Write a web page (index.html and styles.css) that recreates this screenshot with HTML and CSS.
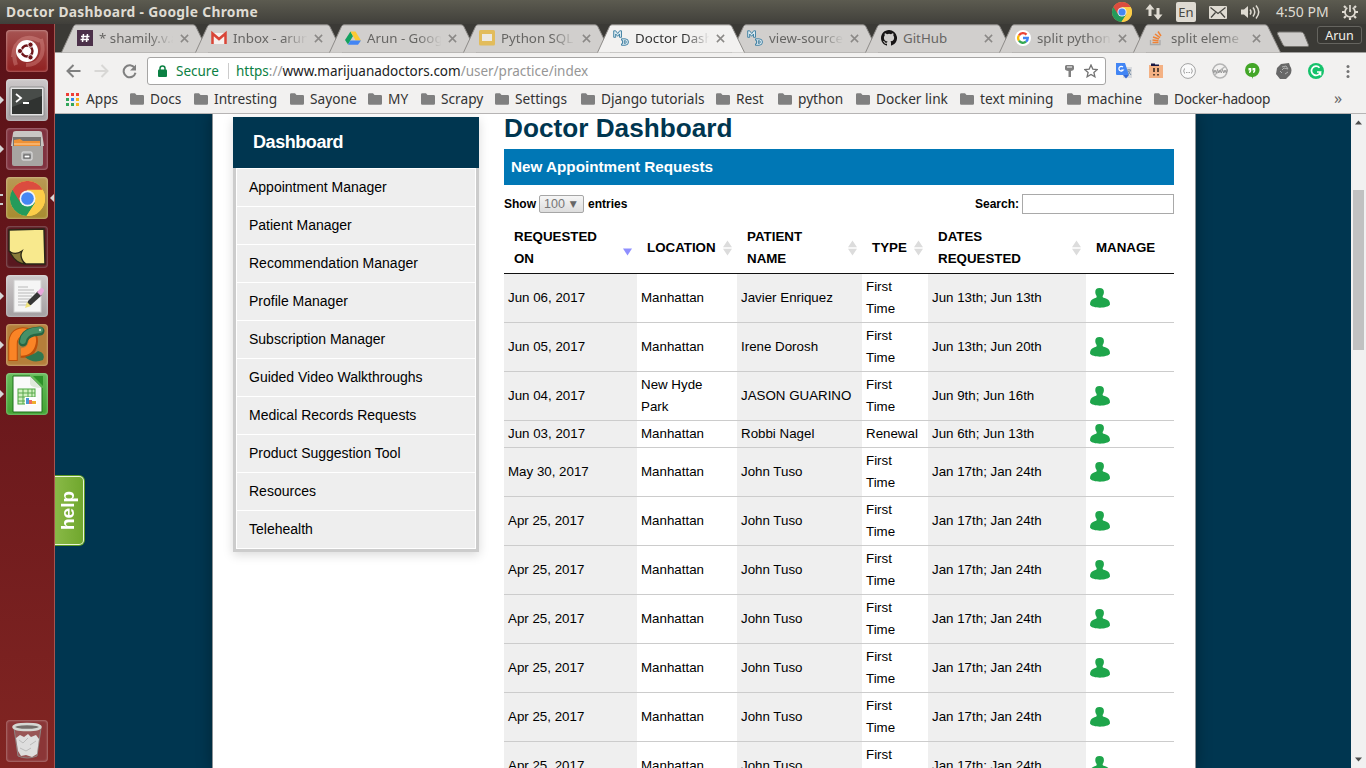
FILE: index.html
```html
<!DOCTYPE html>
<html lang="en">
<head>
<meta charset="utf-8">
<title>Doctor Dashboard</title>
<link rel="stylesheet" href="styles.css">
</head>
<body>
<svg class="defs" width="0" height="0">
  <defs>
    <symbol id="folder" viewBox="0 0 14 12"><path d="M0 1.500Q0 .300 1.200.300H5L6.500 2H12.800Q14 2 14 3.200V10.500Q14 11.700 12.800 11.700H1.200Q0 11.700 0 10.500Z" fill="#808080"/></symbol>
    <symbol id="tabshape" viewBox="0 0 148 29"><path d="M.5 28.500L12.500 2.500Q13.300.800 15 .800H132Q134 .800 134.800 2.500L147.500 28.500" stroke="#8d8b88"/></symbol>
    <symbol id="close" viewBox="0 0 10 10"><path d="M1 1L9 9M9 1L1 9" stroke="#8b8987" stroke-width="1.700"/></symbol>
    <symbol id="md" viewBox="0 0 16 16"><g fill="#d9e8ef" stroke="#387c9f" stroke-width=".9"><path d="M.700 7.300V.800H2.700L4.700 3.500 6.700.800H8.500V7.300H6.500V4L4.700 6.300 2.700 4V7.300Z"/><path fill-rule="evenodd" d="M8.500 8.800H12Q15.500 8.800 15.500 12T12 15.300H8.500V13.800H9.500V10.300H8.500ZM11.300 10.700V13.400H12Q13.300 13.200 13.300 12T12 10.700Z"/></g></symbol>
    <symbol id="google" viewBox="0 0 16 16"><circle cx="8" cy="8" r="8" fill="#fff"/><g fill="none" stroke-width="2.300"><path d="M4 5.300A4.800 4.800 0 0 1 11.500 4.600" stroke="#ea4335"/><path d="M4 5.300A4.800 4.800 0 0 0 4 10.700" stroke="#fbbc05"/><path d="M4 10.700A4.800 4.800 0 0 0 11 11.700" stroke="#34a853"/><path d="M8 8H12.800Q12.800 10.200 11 11.700" stroke="#4285f4"/></g></symbol>
    <symbol id="chrome" viewBox="0 0 36 36"><circle cx="18" cy="18" r="18" fill="#fccd48"/><path d="M18 18L2.400 9A18 18 0 0 0 17 36L26 22Z" fill="#249b5b"/><path d="M18 9H33.600A18 18 0 0 1 17 36L25.800 22.500Z" fill="#fccd48"/><path d="M2.400 9A18 18 0 0 1 33.600 9H18L10 21Z" fill="#db4c3f"/><circle cx="18" cy="18" r="8.200" fill="#f4f4f4"/><circle cx="18" cy="18" r="6.500" fill="#4587f2"/></symbol>
    <symbol id="user" viewBox="0 0 20 20"><path d="M9.500 0C12.700 0 14.100 1.500 13.900 4.500C13.800 6.700 12.600 7.500 12.600 8.500C12.600 9.700 14 9.700 16 10.500C19 11.800 20 13.500 20 16.500C17.500 20.700 2.500 20.700 0 16.500C0 13.500 1 11.800 4 10.500C6 9.700 6.700 9.700 6.700 8.500C6.700 7.500 5.400 6.700 5.300 4.500C5.100 1.500 6.300 0 9.500 0Z" fill="#1ea54b"/></symbol>
    <symbol id="sort" viewBox="0 0 9 16"><path d="M4.500.500L9 7.200H0ZM0 8.800H9L4.500 15.500Z" fill="#dcdcdc"/></symbol>
  </defs>
</svg>

<header class="panel">
  <span class="panel-title">Doctor Dashboard - Google Chrome</span>
  <div class="indicators">
    <svg width="20" height="20"><use href="#chrome"/></svg>
    <svg width="18" height="18" viewBox="0 0 18 18" fill="#dfdbd2"><path d="M5 1L9.500 6.500H6.500V13H3.500V6.500H.500ZM13 17L17.500 11.500H14.500V5H11.500V11.500H8.500Z"/></svg>
    <span class="lang">En</span>
    <svg width="18" height="13" viewBox="0 0 18 13"><rect width="18" height="13" rx="1" fill="#dfdbd2"/><path d="M1.500 1.500L9 7.500 16.500 1.500M2 11.500L6.500 6.500M16 11.500L11.500 6.500" fill="none" stroke="#45443f" stroke-width="1.200"/></svg>
    <svg width="20" height="16" viewBox="0 0 20 16"><path d="M0 5.500H3L7 2V14L3 10.500H0Z" fill="#dfdbd2"/><path d="M9 5.500Q11 8 9 10.500M12 3.500Q15.500 8 12 12.500M15 1.500Q20.500 8 15 14.500" fill="none" stroke="#dfdbd2" stroke-width="1.500"/></svg>
    <span class="clock">4:50 PM</span>
    <svg width="16" height="16" viewBox="0 0 16 16" fill="none" stroke="#dfdbd2"><path d="M5.300 3.800A5 5 0 1 0 10.700 3.800M8 1V8" stroke-width="1.700"/><path d="M3.800 3.800L2 2M12.200 3.800L14 2M3 8H0M13 8H16M4 12L2 14M12 12L14 14M8 13.500V16" stroke-width="2.200"/></svg>
  </div>
</header>

<div class="desktop">
  <nav class="launcher">
    <div class="tile ubuntu"><svg viewBox="0 0 42 42"><g fill="none" stroke="#f2b0aa" stroke-opacity=".3" stroke-width="4"><path d="M7 27C8 8 22 4 34 11M35 9C40 25 33 35 20 35M10 35Q5 21 15 12"/></g><circle cx="21" cy="21" r="11" fill="#fff"/><circle cx="21" cy="21" r="5.500" fill="none" stroke="#6e151a" stroke-width="2.400"/><g fill="#6e151a" stroke="#fff" stroke-width=".9"><circle cx="14" cy="21" r="2.600"/><circle cx="24.500" cy="14.700" r="2.600"/><circle cx="24.500" cy="27.300" r="2.600"/></g></svg></div>
    <div class="tile terminal run"><svg viewBox="0 0 42 42"><rect x="4" y="8" width="34" height="29" rx="1" fill="#e3e3e3" stroke="#8f8f8f"/><rect x="6" y="10" width="30" height="25" fill="#303331"/><path d="M6 10H36V17L6 28Z" fill="#484c49"/><path d="M10 15L15 19 10 23M17 24H23" fill="none" stroke="#fff" stroke-width="1.800"/></svg></div>
    <div class="tile files run"><svg viewBox="0 0 42 42"><path d="M7 5Q7 3 10 3H33Q36 3 36 5L38 18H5Z" fill="#c9c7c4"/><rect x="7" y="9" width="28" height="10" fill="#777370"/><path d="M8 12L14 11 17 13H34V18H8Z" fill="#ee9136"/><path d="M8 16H34" stroke="#ffd29e"/><path d="M6 18H37V36Q37 38 35 38H8Q6 38 6 36Z" fill="#a7a5a2"/><rect x="16" y="24" width="10" height="8" rx="1" fill="#aaa" stroke="#e5e5e5"/><rect x="18" y="27" width="6" height="3" fill="#fff" stroke="#555"/></svg></div>
    <div class="tile chrome focus"><svg viewBox="0 0 42 42"><use href="#chrome" x="4" y="4" width="35" height="35"/></svg></div>
    <div class="tile notes"><svg viewBox="0 0 42 42"><path d="M3 4L38 3 39 38H20L3 25Z" fill="#f8e98d" stroke="#292619" stroke-width="1.500"/><path d="M4 26Q10 29 16 25Q13 31 19 38Q9 37 4 26Z" fill="#897b3a" stroke="#2b2715" stroke-width="1.300"/></svg></div>
    <div class="tile editor run"><svg viewBox="0 0 42 42"><rect x="8" y="5" width="27" height="32" fill="#f5f5f5" stroke="#d0d0d0"/><path d="M12 12H22M12 15H28M12 18H29M12 21H26M12 24H24M12 27H21M12 30H20" stroke="#b9b9b9"/><path d="M20 31L22 26 32 16 36 20 25 30Z" fill="#363636"/><path d="M19 33L21 27 25 31Z" fill="#efe27c"/><path d="M31 17L35 13Q38 13 38 16L35 21Z" fill="#e8a8dc"/></svg></div>
    <div class="tile pycharm run"><svg viewBox="0 0 42 42"><path d="M7 37V20Q7 9 17 8Q29 9 27 20Q25 30 15 29" fill="none" stroke="#bd4f0a" stroke-width="9.500"/><path d="M7 36V20Q7 9 17 8Q28 9 26 19Q24 28 15 28" fill="none" stroke="#fa8426" stroke-width="7.500"/><path d="M17 18Q18 10 27 8L34 7" fill="none" stroke="#276644" stroke-width="9" stroke-linecap="round"/><path d="M17 17Q18 9 27 7L34 6" fill="none" stroke="#469067" stroke-width="6" stroke-linecap="round"/><path d="M19 33Q27 31 32 27Q40 29 37 36Q27 40 19 33Z" fill="#2f774f"/><circle cx="34" cy="6" r="1.200" fill="#c3d9c5"/></svg></div>
    <div class="tile calc run"><svg viewBox="0 0 42 42"><path d="M7 3H24L36 15V39H7Z" fill="#fafafa" stroke="#1e711c"/><path d="M24 3V11Q25 15 36 15Z" fill="#dfe9db"/><path d="M27 3H37V13Z" fill="#2e932a"/><rect x="12" y="16" width="17" height="15" fill="#d0f0be" stroke="#48a83d"/><path d="M12 20H29M12 24H29M12 28H29M17 16V31M22 16V31M26 16V31" stroke="#58a74d"/><rect x="19" y="24" width="12" height="8" fill="#fff"/><path d="M20 31V25H23V31Z" fill="#4a95d5"/><path d="M23 31V27H26V31Z" fill="#ef6c5e"/><path d="M26 31V28H30V31Z" fill="#edae2d"/></svg></div>
    <div class="tile trash"><svg viewBox="0 0 42 42"><path d="M8 8L12 36Q21 40 31 36L35 8" fill="#b7a2a0" fill-opacity=".3" stroke="#8d8482"/><path d="M10 18L14 15 18 17 22 14 25 17 30 15 33 19 31 34 26 37 20 35 15 36 12 31Z" fill="#dedede"/><path d="M13 20L17 23 22 18M24 25L30 21M14 28L20 31 25 28" stroke="#bbb" fill="none"/><ellipse cx="21" cy="7" rx="13.500" ry="3" fill="#746e6a" stroke="#d5d8d3" stroke-width="2.500"/></svg></div>
  </nav>

  <div class="browser">
    <div class="tabs">
      <div class="tab"><svg class="shape"><use href="#tabshape"/></svg><svg class="fav" viewBox="0 0 16 16"><rect width="16" height="16" fill="#4b3049"/><path d="M6.500 4L5.500 12M10.500 4L9.500 12M4 6.500H12.500M3.500 9.500H12" stroke="#fff" stroke-width="1.500"/></svg><span class="label">* shamily.v.a</span><svg class="x"><use href="#close"/></svg></div>
      <div class="tab"><svg class="shape"><use href="#tabshape"/></svg><svg class="fav" viewBox="0 0 16 16"><path d="M1 3H15V14H1Z" fill="#f5f0ee"/><path d="M1.500 14V3.500L8 9 14.500 3.500V14" fill="none" stroke="#d94537" stroke-width="2.500"/></svg><span class="label">Inbox - arun</span><svg class="x"><use href="#close"/></svg></div>
      <div class="tab"><svg class="shape"><use href="#tabshape"/></svg><svg class="fav" viewBox="0 0 16 16"><path d="M5.500 1.500L8 6 3 14.500 0 10Z" fill="#13a160"/><path d="M5.500 1.500H10.500L16 10.500H10.500Z" fill="#fcc934"/><path d="M5.500 10.500H16L13 14.800H3Z" fill="#4285f4"/></svg><span class="label">Arun - Goog</span><svg class="x"><use href="#close"/></svg></div>
      <div class="tab"><svg class="shape"><use href="#tabshape"/></svg><svg class="fav" viewBox="0 0 16 16"><rect width="16" height="15.500" rx="1.500" fill="#e2bc5b"/><rect x="3" y="4" width="10" height="7" fill="#ece9e3"/></svg><span class="label">Python SQL</span><svg class="x"><use href="#close"/></svg></div>
      <div class="tab active"><svg class="shape"><use href="#tabshape"/></svg><svg class="fav"><use href="#md"/></svg><span class="label">Doctor Dash</span><svg class="x"><use href="#close"/></svg></div>
      <div class="tab"><svg class="shape"><use href="#tabshape"/></svg><svg class="fav"><use href="#md"/></svg><span class="label">view-source</span><svg class="x"><use href="#close"/></svg></div>
      <div class="tab"><svg class="shape"><use href="#tabshape"/></svg><svg class="fav" viewBox="0 0 16 16"><path fill="#171515" d="M8 0C3.580 0 0 3.580 0 8c0 3.540 2.290 6.530 5.470 7.590.4.070.55-.17.55-.38 0-.19-.01-.82-.01-1.490-2.010.37-2.530-.49-2.690-.94-.09-.23-.48-.94-.82-1.130-.28-.15-.68-.52-.01-.53.63-.01 1.080.58 1.230.82.72 1.210 1.870.87 2.330.66.07-.52.28-.87.51-1.070-1.780-.2-3.640-.89-3.640-3.950 0-.87.31-1.590.82-2.150-.08-.2-.36-1.020.08-2.120 0 0 .67-.21 2.200.82a7.700 7.700 0 0 1 4 0c1.530-1.040 2.200-.82 2.200-.82.44 1.100.16 1.920.08 2.120.51.56.82 1.270.82 2.150 0 3.070-1.870 3.750-3.650 3.950.29.25.54.73.54 1.480 0 1.070-.01 1.930-.01 2.200 0 .21.15.46.55.38A8 8 0 0 0 8 0"/></svg><span class="label plain">GitHub</span><svg class="x"><use href="#close"/></svg></div>
      <div class="tab"><svg class="shape"><use href="#tabshape"/></svg><svg class="fav"><use href="#google"/></svg><span class="label">split python</span><svg class="x"><use href="#close"/></svg></div>
      <div class="tab"><svg class="shape"><use href="#tabshape"/></svg><svg class="fav" viewBox="0 0 16 16" fill="none"><path d="M1.500 10V14.500H11V10" stroke="#a9aaab" stroke-width="1.300"/><path d="M3.500 12.500H9.500M3.500 10L9.500 10.700M4 7L10 9M6 4L11 7.700M9 1.500L12 6" stroke="#ef8236" stroke-width="1.500"/></svg><span class="label">split eleme</span><svg class="x"><use href="#close"/></svg></div>
      <svg class="newtab" width="34" height="17" viewBox="0 0 34 17"><path d="M3 1H25Q27 1 28 3L32.500 14Q33 15.500 31 15.500H10Q8 15.500 7 14L1.500 3Q1 1 3 1Z" fill="#d0cecc" stroke="#777570"/></svg>
      <span class="profile">Arun</span>
    </div>

    <div class="toolbar">
      <div class="navs">
        <svg width="15" height="14" viewBox="0 0 15 14"><path d="M14.500 7H2M7.500 1L1.500 7 7.500 13" stroke="#808080"/></svg>
        <svg width="15" height="14" viewBox="0 0 15 14"><path d="M.500 7H13M7.500 1L13.500 7 7.500 13" stroke="#d8d7d5"/></svg>
        <svg width="15" height="15" viewBox="0 0 15 15"><path d="M12.700 4A6 6 0 1 0 13.500 8.700" stroke="#808080"/><path d="M14 .500V6.500H8Z" fill="#808080"/></svg>
      </div>
      <div class="omnibox">
        <svg width="9" height="12" viewBox="0 0 9 12"><rect y="4.500" width="9" height="7.500" rx="1" fill="#0b8043"/><path d="M2 5V3.300Q2 1 4.500 1T7 3.300V5" fill="none" stroke="#0b8043" stroke-width="1.500"/></svg>
        <span class="secure">Secure</span>
        <span class="url"><span class="https">https</span>://<b>www.marijuanadoctors.com</b>/user/practice/index</span>
        <svg class="key" width="9" height="12" viewBox="0 0 9 12"><path d="M1.500 0H7.500Q9 0 9 1.500V4Q9 5.500 6 6V12H3.500V6Q0 5.500 0 4V1.500Q0 0 1.500 0Z" fill="#808080"/><path d="M2 2H7" stroke="#fff"/></svg>
        <svg width="14" height="14" viewBox="0 0 14 14"><path d="M7 1L8.800 5.100 13.200 5.500 9.900 8.400 10.900 12.800 7 10.500 3.100 12.800 4.100 8.400.800 5.500 5.200 5.100Z" fill="none" stroke="#737373" stroke-width="1.300"/></svg>
      </div>
      <div class="extensions">
        <svg viewBox="0 0 16 16"><rect x="7" y="4" width="9" height="11" fill="#d8dadd"/><path d="M0 0H9L13 12H1Q0 12 0 11Z" fill="#4285f4"/><path d="M7 12H13L10 15.500Z" fill="#3367d6"/><path d="M7 4A2.400 2.400 0 1 0 7.300 7H5.300" fill="none" stroke="#fff" stroke-width="1.200"/><path d="M11 7H15M13 6V7M14.500 7Q13.500 10 12 12M12 8L15 12" stroke="#748ba4" fill="none"/></svg>
        <svg viewBox="0 0 16 16"><rect x="1" y="2" width="14" height="13" fill="#f4b183"/><path d="M3 3V.500H7V1.500H11V3Z" fill="#171742"/><path d="M6 5V9M10 5V9M6 11V12.500M10 11V12.500" stroke="#352820" stroke-width="1.600"/></svg>
        <svg viewBox="0 0 16 16" fill="none" stroke="#a2a2a2"><circle cx="8" cy="8" r="7.400" fill="#fafafa"/><path d="M5 5.500Q4 5.500 4.200 7L3.500 8 4.200 9Q4 10.500 5 10.500M11 5.500Q12 5.500 11.800 7L12.500 8 11.800 9Q12 10.500 11 10.500"/><path d="M6 9.500H10" stroke-dasharray="1 .500"/></svg>
        <svg viewBox="0 0 16 16" fill="none" stroke="#b5b5b5"><circle cx="8" cy="8" r="7" stroke-width="1.500"/><path d="M2.500 12L13 3.500" stroke-width="1.500"/><path d="M.500 6.500L1.800 10 3 7 4.300 10 5.500 6.500 6.800 10 8 7 9.300 10 10.500 6.500 11.800 10 13 7 14.300 10 15.500 6.500" stroke="#999" stroke-width="1"/></svg>
        <svg viewBox="0 0 16 16"><path d="M8 0A7 7 0 0 1 9 14L8 16V14A7 7 0 0 1 8 0Z" fill="#43a628"/><path d="M4.500 5H7.300V8Q7 10 5 10V8.500Q6 8.500 6 7.500H4.500ZM8.500 5H11.300V8Q11 10 9 10V8.500Q10 8.500 10 7.500H8.500Z" fill="#fff"/></svg>
        <svg viewBox="0 0 16 16"><path d="M5 1L13 0 14 3Q17 7 14 12L10 16H4L0 11 1 5Z" fill="#686868"/><path d="M6 4L10 3 12 6 8 5 6 7M9 11L12 9M4 8L6 10" fill="none" stroke="#b2b2b2"/></svg>
        <svg viewBox="0 0 16 16"><circle cx="8" cy="8" r="8" fill="#15c26b"/><path d="M11.500 4.700A4.600 4.600 0 1 0 12.500 9H9M12.500 9V12.500" fill="none" stroke="#fff" stroke-width="1.700"/></svg>
        <svg class="dots" viewBox="0 0 16 16" fill="#737373"><circle cx="8" cy="3.500" r="1.500"/><circle cx="8" cy="8.500" r="1.500"/><circle cx="8" cy="13.500" r="1.500"/></svg>
      </div>
    </div>

    <div class="bookmarks">
      <span class="mark"><svg class="apps" viewBox="0 0 13 13"><path d="M0 0H3V3H0ZM5 0H8V3H5ZM10 0H13V3H10Z" fill="#ee3e36"/><path d="M0 5H3V8H0ZM0 10H3V13H0ZM5 10H8V13H5Z" fill="#33a65b"/><path d="M5 5H8V8H5Z" fill="#3286ed"/><path d="M10 5H13V8H10ZM10 10H13V13H10Z" fill="#f7b51d"/></svg>Apps</span>
      <span class="mark"><svg><use href="#folder"/></svg>Docs</span>
      <span class="mark"><svg><use href="#folder"/></svg>Intresting</span>
      <span class="mark"><svg><use href="#folder"/></svg>Sayone</span>
      <span class="mark"><svg><use href="#folder"/></svg>MY</span>
      <span class="mark"><svg><use href="#folder"/></svg>Scrapy</span>
      <span class="mark"><svg><use href="#folder"/></svg>Settings</span>
      <span class="mark"><svg><use href="#folder"/></svg>Django tutorials</span>
      <span class="mark"><svg><use href="#folder"/></svg>Rest</span>
      <span class="mark"><svg><use href="#folder"/></svg>python</span>
      <span class="mark"><svg><use href="#folder"/></svg>Docker link</span>
      <span class="mark"><svg><use href="#folder"/></svg>text mining</span>
      <span class="mark"><svg><use href="#folder"/></svg>machine</span>
      <span class="mark snug"><svg><use href="#folder"/></svg>Docker-hadoop</span>
      <span class="more">»</span>
    </div>

    <div class="viewport">
      <div class="site">
        <div class="help"><span>help</span></div>
        <main class="page">
          <aside class="sidebar">
            <h2>Dashboard</h2>
            <ul>
              <li>Appointment Manager</li><li>Patient Manager</li><li>Recommendation Manager</li><li>Profile Manager</li><li>Subscription Manager</li><li>Guided Video Walkthroughs</li><li>Medical Records Requests</li><li>Product Suggestion Tool</li><li>Resources</li><li>Telehealth</li>
            </ul>
          </aside>
          <section class="content">
            <h1>Doctor Dashboard</h1>
            <h3>New Appointment Requests</h3>
            <div class="filters">
              <span>Show</span><span class="select">100<i>▼</i></span><span>entries</span>
              <label class="search">Search:<input type="text"></label>
            </div>
            <table>
              <colgroup><col class="c1"><col class="c2"><col class="c3"><col class="c4"><col class="c5"><col class="c6"></colgroup>
              <thead><tr>
                <th><div>REQUESTED<br>ON<svg class="desc" viewBox="0 0 9 16"><path d="M0 8.500H9L4.500 15.500Z" fill="#8f8fff"/></svg></div></th>
                <th><div>LOCATION<svg><use href="#sort"/></svg></div></th>
                <th><div>PATIENT<br>NAME<svg><use href="#sort"/></svg></div></th>
                <th><div>TYPE<svg><use href="#sort"/></svg></div></th>
                <th><div>DATES<br>REQUESTED<svg><use href="#sort"/></svg></div></th>
                <th><div>MANAGE</div></th>
              </tr></thead>
              <tbody>
                <tr><td>Jun 06, 2017</td><td>Manhattan</td><td>Javier Enriquez</td><td>First<br>Time</td><td>Jun 13th; Jun 13th</td><td><svg><use href="#user"/></svg></td></tr>
                <tr><td>Jun 05, 2017</td><td>Manhattan</td><td>Irene Dorosh</td><td>First<br>Time</td><td>Jun 13th; Jun 20th</td><td><svg><use href="#user"/></svg></td></tr>
                <tr><td>Jun 04, 2017</td><td>New Hyde<br>Park</td><td>JASON GUARINO</td><td>First<br>Time</td><td>Jun 9th; Jun 16th</td><td><svg><use href="#user"/></svg></td></tr>
                <tr><td>Jun 03, 2017</td><td>Manhattan</td><td>Robbi Nagel</td><td>Renewal</td><td>Jun 6th; Jun 13th</td><td><svg><use href="#user"/></svg></td></tr>
                <tr><td>May 30, 2017</td><td>Manhattan</td><td>John Tuso</td><td>First<br>Time</td><td>Jan 17th; Jan 24th</td><td><svg><use href="#user"/></svg></td></tr>
                <tr><td>Apr 25, 2017</td><td>Manhattan</td><td>John Tuso</td><td>First<br>Time</td><td>Jan 17th; Jan 24th</td><td><svg><use href="#user"/></svg></td></tr>
                <tr><td>Apr 25, 2017</td><td>Manhattan</td><td>John Tuso</td><td>First<br>Time</td><td>Jan 17th; Jan 24th</td><td><svg><use href="#user"/></svg></td></tr>
                <tr><td>Apr 25, 2017</td><td>Manhattan</td><td>John Tuso</td><td>First<br>Time</td><td>Jan 17th; Jan 24th</td><td><svg><use href="#user"/></svg></td></tr>
                <tr><td>Apr 25, 2017</td><td>Manhattan</td><td>John Tuso</td><td>First<br>Time</td><td>Jan 17th; Jan 24th</td><td><svg><use href="#user"/></svg></td></tr>
                <tr><td>Apr 25, 2017</td><td>Manhattan</td><td>John Tuso</td><td>First<br>Time</td><td>Jan 17th; Jan 24th</td><td><svg><use href="#user"/></svg></td></tr>
                <tr><td>Apr 25, 2017</td><td>Manhattan</td><td>John Tuso</td><td>First<br>Time</td><td>Jan 17th; Jan 24th</td><td><svg><use href="#user"/></svg></td></tr>
              </tbody>
            </table>
          </section>
        </main>
      </div>
      <div class="scrollbar"><svg width="7" height="5" viewBox="0 0 7 5"><path d="M0 4.500L3.500.500 7 4.500Z"/></svg><div class="thumb"></div><svg width="7" height="5" viewBox="0 0 7 5"><path d="M0 .500H7L3.500 4.500Z"/></svg></div>
    </div>
  </div>
</div>
</body>
</html>
```
FILE: styles.css
```css
* { box-sizing: border-box; }
html, body { margin: 0; height: 768px; overflow: hidden; }
body { width: 1366px; font-family: "Noto Sans", "Open Sans", sans-serif; display: flex; flex-direction: column; }
svg { display: block; flex: none; }
.defs { position: absolute; }

.panel { height: 24px; flex: none; display: flex; align-items: center; justify-content: space-between; padding: 0 8px 0 6px; background: linear-gradient(#5c5b50, #403f3a); color: #dfdbd2; font-size: 13.8px; line-height: 20px; }
.panel-title { font-weight: 700; letter-spacing: .31px; }
.indicators { display: flex; align-items: center; }
.indicators svg:nth-of-type(1) { margin-right: 13px; }
.indicators svg:nth-of-type(2) { margin-right: 13px; }
.lang { width: 20px; height: 20px; border-radius: 2px; background: #dfdbd2; color: #494841; text-align: center; font-size: 13px; line-height: 20px; margin-right: 13px; }
.indicators svg:nth-of-type(3) { margin-right: 14px; }
.indicators svg:nth-of-type(4) { margin-right: 15px; }
.clock { width: 53px; margin-right: 13px; white-space: nowrap; font-size: 14px; }

.desktop { display: flex; height: 744px; }
.launcher { width: 55px; flex: none; display: flex; flex-direction: column; align-items: flex-start; gap: 7px; padding: 6px 0 6px 6px; background: linear-gradient(#5b1218, #6a181c 50%, #812522); border-right: 1px solid #a5544f; }
.tile { position: relative; width: 42px; height: 42px; flex: none; border-radius: 4px; box-shadow: inset 0 0 2px 1px rgba(255,255,255,.28); }
.tile svg { width: 42px; height: 42px; }
.ubuntu { background: linear-gradient(#a65452, #912020); }
.terminal, .editor { background: linear-gradient(#cdc9ca, #a39fa1); }
.files { background: #80323f; }
.chrome { background: linear-gradient(#b99955, #a78c2f); }
.notes { background: #59181f; }
.pycharm { background: #b57e3a; }
.calc { background: linear-gradient(#66bd5b, #41a332); }
.trash { margin-top: auto; background: #8b3637; }
.run::before { content: ""; position: absolute; left: -6px; top: 17px; border: 4px solid transparent; border-left-color: #d6d6d6; border-right: 0; }
.focus::before { content: ""; position: absolute; left: -6px; top: 17px; width: 3px; height: 7px; border: solid #ccc; border-width: 2px 0; }
.focus::after { content: ""; position: absolute; right: -6px; top: 17px; border: 4px solid transparent; border-right-color: #d6d6d6; border-left: 0; }

.browser { width: 1311px; display: flex; flex-direction: column; }
.tabs { height: 29px; flex: none; background: #3b3a36; display: flex; padding-left: 6px; border-bottom: 1px solid #a09f9d; }
.tab { position: relative; width: 134px; flex: none; display: flex; align-items: center; padding: 0 0 0 16px; color: #666563; font-size: 13.3px; }
.shape { position: absolute; left: 0; top: 0; width: 148px; height: 29px; fill: #d1cfcd; }
.active { z-index: 2; color: #333; }
.active .shape { fill: #f2f1f0; }
.fav { width: 16px; height: 16px; position: relative; }
.label { position: relative; width: 81px; margin-left: 6px; white-space: nowrap; line-height: 22px; -webkit-mask-image: linear-gradient(90deg, #000 62%, transparent 92%); mask-image: linear-gradient(90deg, #000 62%, transparent 92%); }
.plain { -webkit-mask-image: none; mask-image: none; }
.x { position: relative; width: 9px; height: 9px; }
.newtab { margin: 7px 0 0 9px; }
.profile { width: 45px; height: 18px; margin: 2px 0 0 7px; border: 1px solid #65645f; border-radius: 3px; color: #f2f0ea; text-align: center; font-size: 12.5px; line-height: 17px; background: #373632; }

.toolbar { height: 35px; flex: none; background: #f2f1f0; display: flex; align-items: flex-start; padding-top: 4px; }
.navs { display: flex; align-items: center; gap: 13px; height: 28px; padding-left: 11px; width: 92px; flex: none; fill: none; stroke-width: 2; }
.omnibox { width: 959px; height: 28px; flex: none; border: 1px solid #a6a5a4; border-radius: 3px; background: #fff; display: flex; align-items: center; padding: 0 7px 1px 10px; font-size: 13.5px; }
.secure { color: #0b8043; margin-left: 9px; border-right: 1px solid #ccc; line-height: 16px; width: 53px; white-space: nowrap; }
.url { color: #969696; margin-left: 7px; white-space: nowrap; letter-spacing: -.01px; }
.url b { color: #222; font-weight: 400; }
.https { color: #0b8043; }
.key { margin: 0 10px 0 auto; }
.extensions { display: flex; align-items: center; height: 28px; gap: 16px; padding-left: 10px; }
.extensions svg { width: 16px; height: 16px; }

.bookmarks { height: 26px; flex: none; border-bottom: 1px solid #b6b4b4; background: #f2f1f0; display: grid; grid-template-columns: 64px 64px 96px 78px 53px 74px 86px 135px 62px 78px 104px 107px 87px 180px 20px; padding-left: 11px; font-size: 13.7px; line-height: 24px; color: #333; }
.mark { display: flex; align-items: center; gap: 6px; white-space: nowrap; height: 22px; }
.snug { letter-spacing: -.25px; }
.mark svg { width: 14px; height: 12px; }
.mark .apps { width: 13px; height: 13px; margin-right: 1px; }
.more { line-height: 20px; font-size: 16px; color: #666; }

.viewport { height: 654px; display: flex; overflow: hidden; font-family: "Liberation Sans", Arial, sans-serif; }
.site { position: relative; width: 1296px; height: 654px; background: #003650; padding-left: 157px; overflow: hidden; }
.help { position: absolute; left: 0; top: 361px; width: 30px; height: 71px; background: #5b9b24; border-radius: 0 6px 6px 0; padding: 1px 1px 1px 0; }
.help span { display: block; height: 69px; width: 29px; border: 1.5px solid #e9f5d6; border-right: 0; border-radius: 5px 0 0 5px; background: linear-gradient(270deg, #89b947, #70a72d); color: #fff; font: bold 19px/25px "Liberation Sans", sans-serif; writing-mode: vertical-rl; transform: rotate(180deg); text-align: center; }
.page { width: 984px; height: 654px; background: #fff; border: solid #8c9296; border-width: 0 1px; box-shadow: 0 0 14px rgba(0,0,0,.35); display: flex; align-items: flex-start; padding: 3px 20px 0; gap: 25px; }
.sidebar { width: 246px; flex: none; box-shadow: 0 3px 10px rgba(0,0,0,.15); }
.sidebar h2 { margin: 0; height: 51px; background: #003650; color: #fff; padding-left: 20px; font-size: 18px; letter-spacing: -.43px; line-height: 50px; }
.sidebar ul { margin: 0; padding: 0 1px 1px; list-style: none; background: #fff; border: 3px solid #ccc; border-top: 0; }
.sidebar li { height: 38px; border-top: 1px solid #fff; background: #eee; padding-left: 12px; font-size: 14px; line-height: 37px; color: #000; }
.content { width: 670px; flex: none; }
h1 { margin: 0; height: 32px; font-size: 26.2px; line-height: 23px; color: #003650; white-space: nowrap; }
h3 { margin: 0; height: 36px; background: #0077b5; color: #fff; padding-left: 7px; font-size: 15.25px; line-height: 36px; }
.filters { height: 41px; display: flex; align-items: flex-start; padding-top: 9px; font-size: 12px; font-weight: bold; line-height: 20px; }
.select { width: 45px; height: 18px; margin: 1px 4px 0 3px; border: 1px solid #a6a6a6; border-radius: 2px; background: linear-gradient(#f6f6f6, #ddd); color: #777; font-size: 12.5px; font-weight: 400; line-height: 17px; padding-left: 4px; display: flex; }
.select i { font: 9px/17px "DejaVu Sans", sans-serif; color: #666; margin-left: 5px; }
.search { margin-left: auto; display: flex; gap: 3px; }
.search input { width: 152px; height: 20px; border: 1px solid #a9a9a9; padding: 1px; background: #fff; }
table { width: 670px; table-layout: fixed; border-collapse: separate; border-spacing: 0; font-size: 13.33px; line-height: 22px; color: #000; }
.c1 { width: 133px; } .c2 { width: 100px; } .c3 { width: 125px; } .c4 { width: 66px; } .c5 { width: 158px; } .c6 { width: 88px; }
th { height: 48px; padding: 0 0 3px; border-bottom: 1px solid #111; text-align: left; }
th div { position: relative; padding-left: 10px; }
th svg { position: absolute; right: 5px; top: 50%; margin-top: -8px; width: 9px; height: 16px; }
td { padding: 2px 4px; border-bottom: 1px solid #ccc; vertical-align: middle; white-space: nowrap; }
td:nth-child(odd) { background: #efefef; }
td svg { width: 20px; height: 20px; }
.scrollbar { width: 15px; background: #f1f1f1; display: flex; flex-direction: column; align-items: center; padding: 6px 0; fill: #4d4d4d; }
.thumb { width: 11px; height: 160px; margin: 65px 0 auto; background: #c1c1c1; }
```
